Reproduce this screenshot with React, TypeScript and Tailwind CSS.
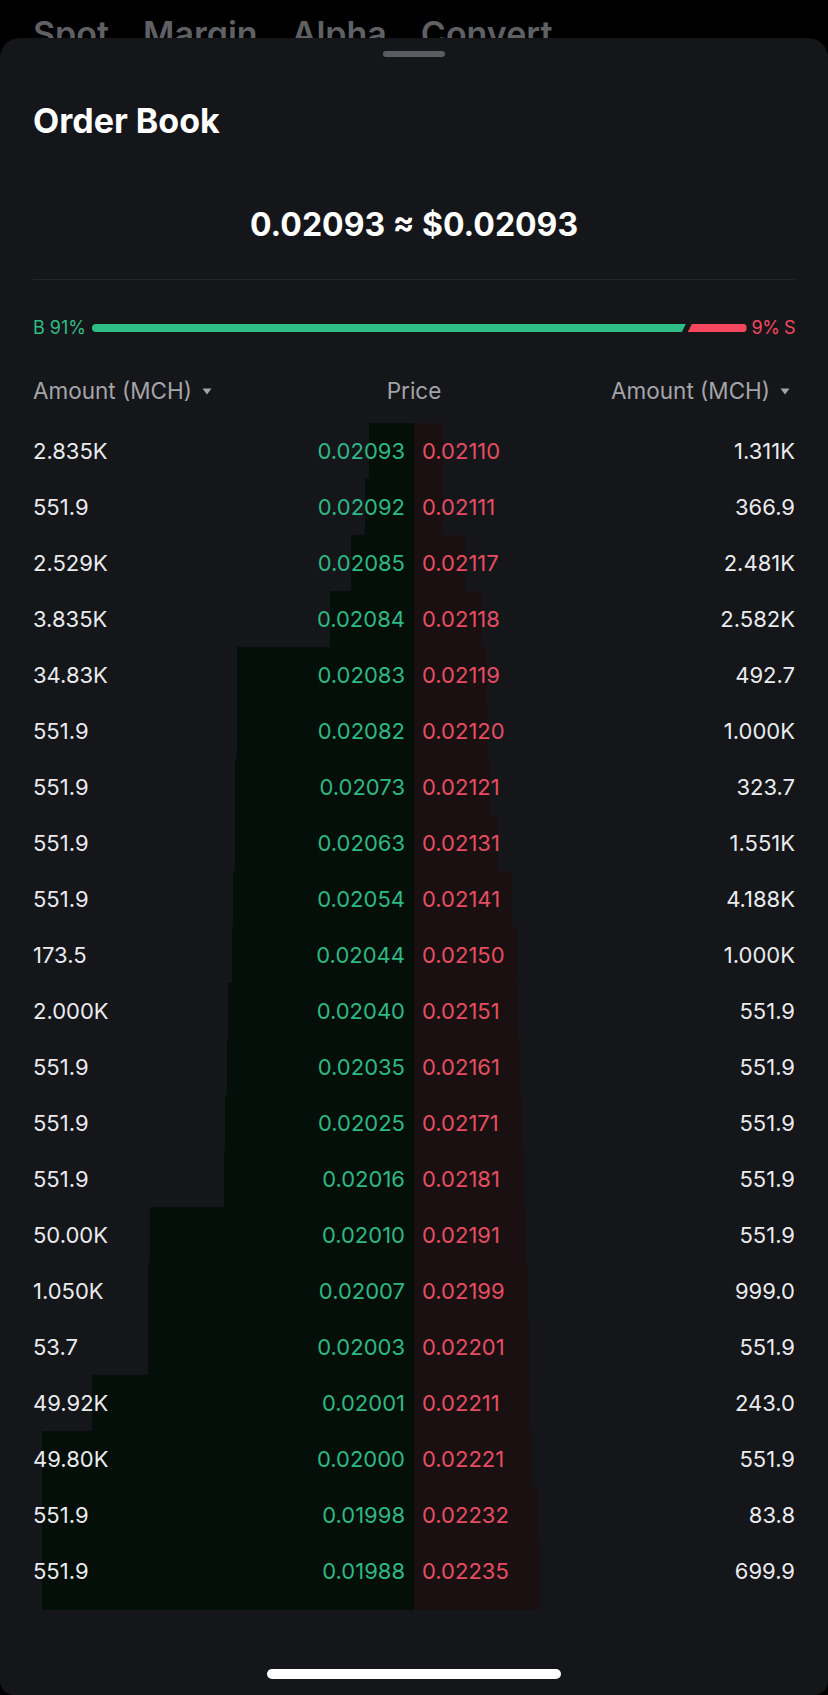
import React from 'react';

type Level = {
    bidAmt: string;
    bid: string;
    ask: string;
    askAmt: string;
    // left edge of the bid depth bar, right edge of the ask depth bar (px)
    bidEdge: number;
    askEdge: number;
};

const levels: Level[] = [
    { bidAmt: '2.835K', bid: '0.02093', ask: '0.02110', askAmt: '1.311K', bidEdge: 369, askEdge: 443 },
    { bidAmt: '551.9', bid: '0.02092', ask: '0.02111', askAmt: '366.9', bidEdge: 365, askEdge: 443 },
    { bidAmt: '2.529K', bid: '0.02085', ask: '0.02117', askAmt: '2.481K', bidEdge: 351, askEdge: 465 },
    { bidAmt: '3.835K', bid: '0.02084', ask: '0.02118', askAmt: '2.582K', bidEdge: 330, askEdge: 482 },
    { bidAmt: '34.83K', bid: '0.02083', ask: '0.02119', askAmt: '492.7', bidEdge: 237, askEdge: 487 },
    { bidAmt: '551.9', bid: '0.02082', ask: '0.02120', askAmt: '1.000K', bidEdge: 237, askEdge: 488 },
    { bidAmt: '551.9', bid: '0.02073', ask: '0.02121', askAmt: '323.7', bidEdge: 235, askEdge: 490 },
    { bidAmt: '551.9', bid: '0.02063', ask: '0.02131', askAmt: '1.551K', bidEdge: 235, askEdge: 498 },
    { bidAmt: '551.9', bid: '0.02054', ask: '0.02141', askAmt: '4.188K', bidEdge: 233, askEdge: 512 },
    { bidAmt: '173.5', bid: '0.02044', ask: '0.02150', askAmt: '1.000K', bidEdge: 232, askEdge: 517 },
    { bidAmt: '2.000K', bid: '0.02040', ask: '0.02151', askAmt: '551.9', bidEdge: 228, askEdge: 518 },
    { bidAmt: '551.9', bid: '0.02035', ask: '0.02161', askAmt: '551.9', bidEdge: 227, askEdge: 520 },
    { bidAmt: '551.9', bid: '0.02025', ask: '0.02171', askAmt: '551.9', bidEdge: 225, askEdge: 522 },
    { bidAmt: '551.9', bid: '0.02016', ask: '0.02181', askAmt: '551.9', bidEdge: 224, askEdge: 524 },
    { bidAmt: '50.00K', bid: '0.02010', ask: '0.02191', askAmt: '551.9', bidEdge: 150, askEdge: 526 },
    { bidAmt: '1.050K', bid: '0.02007', ask: '0.02199', askAmt: '999.0', bidEdge: 148, askEdge: 528 },
    { bidAmt: '53.7', bid: '0.02003', ask: '0.02201', askAmt: '551.9', bidEdge: 148, askEdge: 529 },
    { bidAmt: '49.92K', bid: '0.02001', ask: '0.02211', askAmt: '243.0', bidEdge: 92, askEdge: 530 },
    { bidAmt: '49.80K', bid: '0.02000', ask: '0.02221', askAmt: '551.9', bidEdge: 42, askEdge: 532 },
    { bidAmt: '551.9', bid: '0.01998', ask: '0.02232', askAmt: '83.8', bidEdge: 42, askEdge: 538 },
    { bidAmt: '551.9', bid: '0.01988', ask: '0.02235', askAmt: '699.9', bidEdge: 42, askEdge: 540 },
];

const MID = 414;

const Caret = () => (
    <svg width="10" height="7" viewBox="0 0 10 7" className="ml-[10px] shrink-0">
        <path d="M0.5 0.5h9L5 6.5z" fill="#a3a4a9" />
    </svg>
);

// depth background for one row, bid side grows left, ask side grows right
const DepthBars = ({ bidEdge, askEdge }: { bidEdge: number; askEdge: number }) => (
    <>
        <div
            className="absolute inset-y-0 bg-[#050f0a]"
            style={{ left: bidEdge, width: MID - bidEdge }}
        />
        <div
            className="absolute inset-y-0 bg-[#1b1011]"
            style={{ left: MID, width: askEdge - MID }}
        />
    </>
);

const Row = ({ level }: { level: Level }) => (
    <li className="relative h-[56px]">
        <DepthBars bidEdge={level.bidEdge} askEdge={level.askEdge} />
        <div className="relative grid h-full grid-cols-2 items-center px-[33px] text-[22px] leading-none">
            <div className="flex items-center justify-between pr-[9px]">
                <span className="text-[#eaebee]">{level.bidAmt}</span>
                <span className="text-[#2eb883]">{level.bid}</span>
            </div>
            <div className="flex items-center justify-between pl-[8px]">
                <span className="text-[#e54d62]">{level.ask}</span>
                <span className="text-[#eaebee]">{level.askAmt}</span>
            </div>
        </div>
    </li>
);

export default function App() {
    const last = levels[levels.length - 1];

    return (
        <div className="min-h-screen bg-black font-[Inter,sans-serif] antialiased">
            {/* page behind the sheet, mostly hidden */}
            <div className="h-[38px] overflow-hidden">
                <div className="flex gap-[34px] px-[33px] pt-[17px] text-[34px] font-semibold leading-none text-[#5f6064]">
                    <span>Spot</span>
                    <span>Margin</span>
                    <span>Alpha</span>
                    <span>Convert</span>
                </div>
            </div>

            <div className="flex flex-col rounded-t-[20px] rounded-b-[14px] bg-[#15161a] pt-[13px] pb-[16px]">
                <div className="mx-auto h-[6px] w-[62px] rounded-full bg-[#5b5c61]" />

                <h1 className="mt-[44px] px-[33px] text-[34px] font-bold leading-[40px] text-white">
                    Order Book
                </h1>

                <div className="mt-[64px] text-center text-[32px] font-bold leading-[40px] text-white">
                    0.02093 ≈ $0.02093
                </div>

                <div className="mx-[33px] mt-[34px] h-px bg-[#24252a]" />

                {/* buy / sell ratio */}
                <div className="mt-[38px] flex h-[20px] items-center px-[33px] text-[18px] leading-none">
                    <span className="text-[#2ebd85]">B 91%</span>
                    <div className="ml-[6px] flex flex-1 gap-[2px]">
                        <div className="h-[8px] flex-[91] rounded-l-full bg-[#2ebd85] [clip-path:polygon(0_0,100%_0,calc(100%-4px)_100%,0_100%)]" />
                        <div className="h-[8px] flex-[9] rounded-r-full bg-[#f6465d] [clip-path:polygon(4px_0,100%_0,100%_100%,0_100%)]" />
                    </div>
                    <span className="ml-[5px] tracking-[-0.5px] text-[#f6465d]">9% S</span>
                </div>

                {/* column headers */}
                <div className="mt-[38px] grid h-[30px] grid-cols-3 items-center px-[33px] text-[22.5px] leading-none text-[#a3a4a9]">
                    <div className="flex items-center">
                        <span>Amount (MCH)</span>
                        <Caret />
                    </div>
                    <div className="text-center">Price</div>
                    <div className="flex items-center justify-end pr-[5px]">
                        <span>Amount (MCH)</span>
                        <Caret />
                    </div>
                </div>

                <ul className="mt-[17px]">
                    {levels.map((level, i) => (
                        <Row key={i} level={level} />
                    ))}
                    {/* depth bars run a little past the last row */}
                    <li className="relative h-[11px]">
                        <DepthBars bidEdge={last.bidEdge} askEdge={last.askEdge} />
                    </li>
                </ul>

                <div className="mx-auto mt-[59px] h-[10px] w-[294px] rounded-full bg-white" />
            </div>
        </div>
    );
}
